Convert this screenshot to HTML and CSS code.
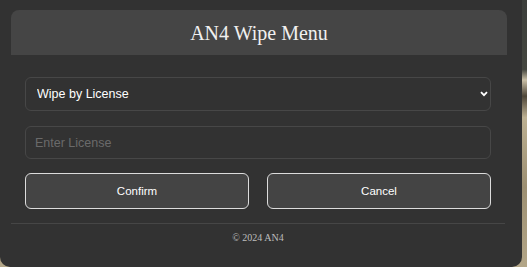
FILE: index.html
```html
<!DOCTYPE html>
<html lang="en">
<head>
    <meta charset="UTF-8">
    <meta name="viewport" content="width=device-width, initial-scale=1.0">
    <title>AN4 Wipe Menu</title>
    <link rel="stylesheet" href="styles.css">
</head>
<body>
    <div class="window">
        <div class="menu-header">
            <h1>AN4 Wipe Menu</h1>
        </div>

        <div class="menu-body">
            <div class="select-wrap">
                <select class="field select" id="wipeType">
                    <option>Wipe by License</option>
                    <option>Wipe by ID</option>
                    <option>Wipe All</option>
                </select>
                <svg class="chevron" width="8" height="6" viewBox="0 0 8 6">
                    <path d="M1 1.2 L4 4.2 L7 1.2" fill="none" stroke="#fff" stroke-width="1.8"/>
                </svg>
            </div>
            <input class="field input" type="text" placeholder="Enter License">
            <div class="actions">
                <button class="btn">Confirm</button>
                <button class="btn">Cancel</button>
            </div>
        </div>

        <div class="menu-footer">© 2024 AN4</div>
    </div>
</body>
</html>
```

FILE: styles.css
```css
body {
    margin: 0;
    height: 267px;
    overflow: hidden;
    background: linear-gradient(180deg, #3b3e3b 0%, #44463f 26%, #c9bfa6 30%, #4d4538 36%, #bcb092 44%, #9c8f72 70%, #b3a688 100%);
}
.window {
    width: 522px;
    height: 267px;
    box-sizing: border-box;
    padding: 10px 15px 0 11px;
    background: #323232;
    border-radius: 0 0 10px 10px;
}
.menu-header {
    background: #454545;
    border-radius: 8px 8px 0 0;
    height: 45px;
}
.menu-header h1 {
    margin: 0;
    font-family: "Liberation Serif", "Times New Roman", serif;
    font-weight: normal;
    font-size: 20px;
    line-height: 46px;
    color: #f0f0f0;
    text-align: center;
}
.menu-body {
    padding: 22px 16px 0 14px;
}
.select-wrap {
    position: relative;
}
.field {
    display: block;
    width: 100%;
    box-sizing: border-box;
    background: #323232;
    border: 1px solid #474747;
    border-radius: 6px;
    font-family: "Liberation Sans", Arial, sans-serif;
    font-size: 12.5px;
    outline: none;
}
.select {
    height: 34px;
    padding: 0 0 0 11px;
    color: #fff;
    -webkit-appearance: none;
    appearance: none;
}
.chevron {
    position: absolute;
    right: 3px;
    top: 14px;
    pointer-events: none;
}
.input {
    height: 33px;
    margin-top: 15px;
    padding: 0 0 0 9px;
    color: #fff;
}
.input::placeholder {
    color: #6a6a6a;
}
.actions {
    display: flex;
    gap: 18px;
    margin-top: 14px;
}
.btn {
    flex: 1;
    height: 36px;
    background: #444;
    border: 1px solid #dcdcdc;
    border-radius: 6px;
    color: #fff;
    font-family: "Liberation Sans", Arial, sans-serif;
    font-size: 11.5px;
    cursor: pointer;
}
.btn:hover {
    background: #505050;
}
.menu-footer {
    margin: 14px 2px 0 0;
    border-top: 1px solid #464646;
    padding-top: 8px;
    text-align: center;
    font-family: "Liberation Serif", "Times New Roman", serif;
    font-size: 10px;
    line-height: 12px;
    color: #bdbdbd;
}
```
